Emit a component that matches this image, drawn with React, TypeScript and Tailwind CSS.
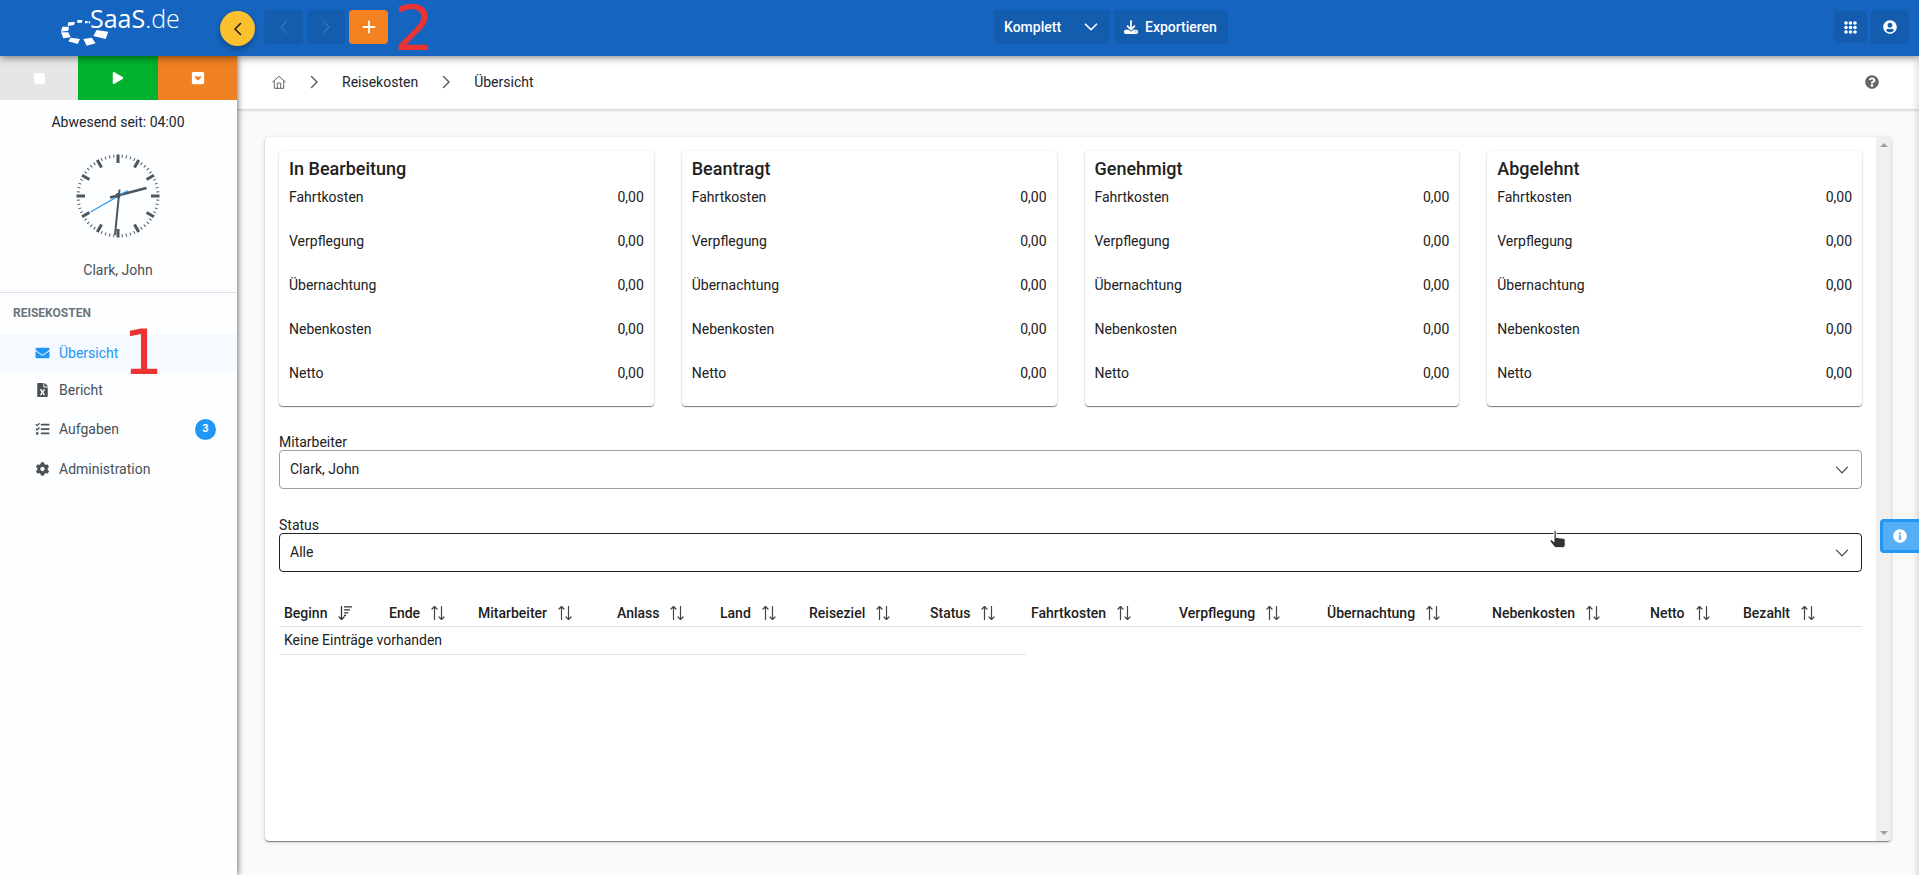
import React from 'react';
import {
  FaCaretSquareDown,
  FaCog,
  FaEnvelope,
  FaFileExcel,
  FaInfoCircle,
  FaPlay,
  FaQuestionCircle,
  FaTasks,
  FaUserCircle,
} from 'react-icons/fa';
import { FaDownload } from 'react-icons/fa6';

const summaryTitles = ['In Bearbeitung', 'Beantragt', 'Genehmigt', 'Abgelehnt'];
const costTypes = ['Fahrtkosten', 'Verpflegung', 'Übernachtung', 'Nebenkosten', 'Netto'];

const columns = [
  { label: 'Beginn', width: 'w-[105px]' },
  { label: 'Ende', width: 'w-[89px]' },
  { label: 'Mitarbeiter', width: 'w-[139px]' },
  { label: 'Anlass', width: 'w-[103px]' },
  { label: 'Land', width: 'w-[89px]' },
  { label: 'Reiseziel', width: 'w-[121px]' },
  { label: 'Status', width: 'w-[101px]' },
  { label: 'Fahrtkosten', width: 'w-[148px]' },
  { label: 'Verpflegung', width: 'w-[148px]' },
  { label: 'Übernachtung', width: 'w-[165px]' },
  { label: 'Nebenkosten', width: 'w-[158px]' },
  { label: 'Netto', width: 'w-[93px]' },
  { label: 'Bezahlt', width: 'w-[124px]' },
];

const navItems = [
  { label: 'Übersicht', icon: FaEnvelope, active: true, height: 'h-[37px]' },
  { label: 'Bericht', icon: FaFileExcel, height: 'h-[37px]' },
  { label: 'Aufgaben', icon: FaTasks, badge: 3, height: 'h-[42px]' },
  { label: 'Administration', icon: FaCog, height: 'h-[37px]' },
];

const Chevron: React.FC<{ d: string; className?: string; width?: number }> = ({ d, className, width = 1.4 }) => (
  <svg viewBox="0 0 14 14" className={className} fill="none" stroke="currentColor" strokeWidth={width} strokeLinecap="round" strokeLinejoin="round" aria-hidden="true">
    <path d={d} />
  </svg>
);

const LEFT = 'M9.5 1.5 4 7l5.5 5.5';
const RIGHT = 'M4.5 1.5 10 7l-5.5 5.5';
const DOWN = 'M1.5 4.2 7 9.8l5.5-5.6';

const Logo = () => (
  <a href="#" aria-label="SaaS.de" className="relative block h-[40px] w-[120px] text-white">
    <svg viewBox="0 0 120 40" className="absolute inset-0 h-full w-full" fill="currentColor" aria-hidden="true">
      <path d="M36.700 24l11.600 1.700-2.600 7.300-12.400-3z" />
      <path d="M23.300 33l8.400-1.300 4 5.600-9 2.400z" />
      <path d="M10.700 31.700l9.300 1.300-2.300 5-9.400-2.700z" />
      <path d="M1 26.300h7.300l2.400 5-7.400 1z" />
      <path d="M2.300 20.700H9l-.7 4-7.300 1z" />
      <path d="M8.300 16.300l6.700-.3-1 3-6.300 1z" />
      <path d="M17.300 14h5l-.3 2.700-4.700.3z" />
      <path d="M25 15h2.700l-.2 2.200H25z" />
      <path d="M28.600 15.400h1.600v1.900h-1.600z" />
    </svg>
    <span className="absolute left-[30px] top-[-4px] font-['Open_Sans'] text-[25px] font-normal leading-[32px]">
      SaaS<span className="font-light">.de</span>
    </span>
  </a>
);

const Clock = () => (
  <svg viewBox="0 0 84 84" className="h-[84px] w-[84px]" aria-hidden="true">
    {Array.from({ length: 60 }, (_, i) => (
      <line
        key={i}
        x1="42"
        x2="42"
        y1="0.500"
        y2={i % 5 ? 3.5 : 9}
        stroke="#4b5661"
        strokeWidth={i % 5 ? 1 : 3}
        transform={`rotate(${i * 6} 42 42)`}
      />
    ))}
    <path d="M34 43.500 70.500 34" stroke="#4b5661" strokeWidth="2.500" />
    <path d="M43.500 35.500 39 81" stroke="#4b5661" strokeWidth="2" />
    <path d="M52 36.500 14.500 58" stroke="#2196f3" strokeWidth="1.200" />
    <circle cx="42" cy="41.500" r="2.500" fill="#4b5661" />
  </svg>
);

const HomeIcon = () => (
  <svg viewBox="0 0 14 14" className="h-[14px] w-[14px]" fill="none" stroke="currentColor" strokeLinejoin="round" strokeLinecap="round" aria-hidden="true">
    <path d="M.6 7 7 1.200 13.400 7M2.300 5.800v7.500h9.400V5.800M5.300 13.300V8h3.400v5.300" />
  </svg>
);

const SortIcon = () => (
  <svg viewBox="0 0 14 14" className="h-[14px] w-[14px]" fill="none" stroke="#444" strokeWidth="1.200" strokeLinecap="round" strokeLinejoin="round" aria-hidden="true">
    <path d="M3.500 13.500V.6M1 3 3.500.5 6 3M10.500.5v12.900M8 11l2.500 2.500L13 11" />
  </svg>
);

const SortDownIcon = () => (
  <svg viewBox="0 0 14 14" className="h-[14px] w-[14px]" fill="none" stroke="#333" strokeWidth="1.300" strokeLinecap="round" strokeLinejoin="round" aria-hidden="true">
    <path d="M3.500.5v13M1 11l2.500 2.500L6 11M6.500.8H13.500M6.500 3.800h5M6.500 6.800h3.300M6.500 9.500h1" />
  </svg>
);

const SelectField: React.FC<{ id: string; label: string; value: string; border: string }> = ({ id, label, value, border }) => (
  <div>
    <label htmlFor={id} className="block h-4 leading-4">{label}</label>
    <div className="grid items-center">
      <select id={id} className={`col-start-1 row-start-1 h-[39px] w-full appearance-none rounded border bg-white px-[10px] pb-[2px] ${border}`}>
        <option>{value}</option>
      </select>
      <Chevron d={DOWN} width={1.2} className="pointer-events-none col-start-1 row-start-1 mr-[13px] h-[14px] w-[14px] justify-self-end text-[#444]" />
    </div>
  </div>
);

const Header = () => (
  <header className="relative z-20 flex h-14 shrink-0 items-start bg-[#1565c0] font-medium text-white shadow-[0_1px_8px_rgba(0,0,0,0.55)]">
    <div className="flex w-[220px] shrink-0 pl-[60px] pt-[6px]">
      <Logo />
    </div>
    <button aria-label="Menü einklappen" className="mt-[11px] flex h-[35px] w-[35px] items-center justify-center rounded-full bg-[#fbc02d] text-[#222] shadow-[0_3px_6px_rgba(0,0,0,0.3)]">
      <Chevron d={LEFT} width={1.6} className="h-[14px] w-[14px]" />
    </button>
    <div className="ml-[9px] flex gap-1 pt-[10px]">
      <button aria-label="Zurück" className="flex h-[34px] w-[39px] items-center justify-center rounded bg-[#135cae] text-[#2f74c2]">
        <Chevron d={LEFT} className="h-[14px] w-[14px]" />
      </button>
      <button aria-label="Vor" className="flex h-[34px] w-[38px] items-center justify-center rounded bg-[#135cae] text-[#2f74c2]">
        <Chevron d={RIGHT} className="h-[14px] w-[14px]" />
      </button>
      <button aria-label="Neu" className="flex h-[34px] w-[39px] items-center justify-center rounded bg-[#f58220]">
        <Chevron d="M7 1.500v11M1.500 7h11" width={1.8} className="h-[14px] w-[14px]" />
      </button>
    </div>
    <div className="flex flex-1 justify-center gap-1 pt-[10px]">
      <div className="grid items-center">
        <select aria-label="Ansicht" className="col-start-1 row-start-1 h-[34px] w-[116px] appearance-none rounded bg-[#135cae] px-[10px]">
          <option>Komplett</option>
        </select>
        <Chevron d={DOWN} width={1.6} className="pointer-events-none col-start-1 row-start-1 mr-3 h-[14px] w-[14px] justify-self-end" />
      </div>
      <button className="flex h-[34px] w-[114px] items-center gap-[7px] rounded bg-[#135cae] px-[10px]">
        <FaDownload className="h-[14px] w-[14px]" />
        Exportieren
      </button>
    </div>
    <div className="flex items-center gap-1 pr-[10px] pt-[10px]">
      <button aria-label="Apps" className="flex h-8 w-[33px] items-center justify-center rounded bg-[#135cae]">
        <svg viewBox="0 0 13 13" className="h-[13px] w-[13px]" fill="currentColor" aria-hidden="true">
          {[2, 6.5, 11].map((y) => [2, 6.5, 11].map((x) => <circle key={`${x}-${y}`} cx={x} cy={y} r="1.800" />))}
        </svg>
      </button>
      <button aria-label="Benutzer" className="flex h-[34px] w-[38px] items-center justify-center rounded bg-[#135cae]">
        <FaUserCircle className="h-[14px] w-[14px]" />
      </button>
    </div>
    <span className="absolute left-[394px] top-px font-['DejaVu_Sans'] text-[63px] font-normal leading-[56px] text-[#eb3334]">2</span>
  </header>
);

const Sidebar = () => (
  <aside className="relative z-10 flex w-[237px] shrink-0 flex-col bg-[#fdfeff] text-[#495057] shadow-[1px_0_6px_rgba(0,0,0,0.55)]">
    <div className="flex h-11 text-white">
      <button aria-label="Stopp" className="flex w-[78px] items-center justify-center bg-[#e6e6e6]">
        <span className="h-[11px] w-[11px] rounded-[2px] bg-white" />
      </button>
      <button aria-label="Start" className="flex w-20 items-center justify-center bg-[#00b22d]">
        <FaPlay className="h-[12px] w-[12px]" />
      </button>
      <button aria-label="Mehr" className="flex flex-1 items-center justify-center bg-[#ef8122]">
        <FaCaretSquareDown className="h-[14px] w-[14px]" />
      </button>
    </div>
    <div className="flex flex-col items-center border-b border-[#dee2e6] py-3 pr-px">
      <p className="leading-5 text-[#212529]">Abwesend seit: 04:00</p>
      <div className="py-[22px]">
        <Clock />
      </div>
      <p className="leading-5">Clark, John</p>
    </div>
    <h2 className="mt-[10px] px-[13px] text-[12px] font-bold leading-5 text-[#6c757d]">REISEKOSTEN</h2>
    <nav className="mt-[11px]">
      {navItems.map(({ label, icon: Icon, active, badge, height }) => (
        <a
          key={label}
          href="#"
          className={`flex items-center pl-[35px] pr-[21px] ${height} ${active ? 'bg-[#f4faff] text-[#2196f3]' : ''}`}
        >
          <Icon className="h-[14px] w-[15px]" />
          <span className="ml-[9px] flex-1">{label}</span>
          {badge && (
            <span className="flex h-[21px] w-[21px] items-center justify-center rounded-full bg-[#2196f3] text-[11px] font-bold text-white">
              {badge}
            </span>
          )}
        </a>
      ))}
    </nav>
    <span className="absolute left-[123px] top-[260px] font-['DejaVu_Sans'] text-[63px] leading-[74px] text-[#eb3334]">1</span>
  </aside>
);

const Breadcrumb = () => (
  <div className="flex h-[53px] shrink-0 items-center bg-white pb-[2px] pl-[35px] pr-10 text-[#212529] shadow-[0_1px_3px_rgba(0,0,0,0.2)]">
    <nav className="flex flex-1 items-center" aria-label="Breadcrumb">
      <a href="#" aria-label="Start" className="text-[#666]"><HomeIcon /></a>
      <Chevron d={RIGHT} className="mx-[21px] h-[14px] w-[14px] text-[#555]" />
      <a href="#">Reisekosten</a>
      <Chevron d={RIGHT} className="mx-[21px] h-[14px] w-[14px] text-[#555]" />
      <a href="#">Übersicht</a>
    </nav>
    <button aria-label="Hilfe" className="text-[#666]">
      <FaQuestionCircle className="h-[14px] w-[14px]" />
    </button>
  </div>
);

const SummaryCard: React.FC<{ title: string }> = ({ title }) => (
  <section className="rounded bg-white px-[10px] pb-[11px] pt-[6px] shadow-[0_1px_1px_rgba(0,0,0,0.5),0_0_3px_rgba(0,0,0,0.1)]">
    <h3 className="text-[18px] font-medium leading-6">{title}</h3>
    <dl className="-mt-[6px]">
      {costTypes.map((type) => (
        <div key={type} className="flex h-11 items-center justify-between">
          <dt>{type}</dt>
          <dd>0,00</dd>
        </div>
      ))}
    </dl>
  </section>
);

const ExpenseTable = () => (
  <table className="mt-[29px] w-full table-fixed text-left">
    <thead>
      <tr className="border-b border-[#e2e2e2]">
        {columns.map(({ label, width }, idx) => (
          <th key={label} className={`h-[25px] p-0 pl-[5px] font-medium ${width}`}>
            <button className="flex items-center gap-[11px]">
              {label}
              {idx === 0 ? <SortDownIcon /> : <SortIcon />}
            </button>
          </th>
        ))}
      </tr>
    </thead>
    <tbody>
      <tr>
        <td colSpan={7} className="h-7 border-b border-[#e2e2e2] p-0 pl-[5px]">Keine Einträge vorhanden</td>
      </tr>
    </tbody>
  </table>
);

const ScrollTrack = () => (
  <div className="flex w-[15px] shrink-0 flex-col items-center justify-between rounded-r bg-[#f0f0f0] py-[6px] text-[#a0a0a0]">
    <svg viewBox="0 0 8 4" className="h-1 w-2" fill="currentColor" aria-hidden="true"><path d="M4 0l4 4H0z" /></svg>
    <svg viewBox="0 0 8 4" className="h-1 w-2" fill="currentColor" aria-hidden="true"><path d="M0 0h8L4 4z" /></svg>
  </div>
);

const HandCursor = () => (
  <svg viewBox="0 0 18 22" className="absolute left-[1549px] top-[529px] z-30 h-[22px] w-[18px]" aria-hidden="true">
    <path
      d="M5 2.500c0-1.300 2.200-1.300 2.200 0V8.500l7 .7c1.400.3 2 1.200 2 2.300v4c0 1.800-1 3.200-2.500 3.200H7.500c-1 0-1.800-.4-2.400-1.200L1.200 12.500c-.6-1.200.8-2.200 1.800-1.400L5 12.800z"
      fill="#333"
      stroke="#fff"
      strokeWidth="1"
    />
  </svg>
);

const App: React.FC = () => {
  return (
    <div className="relative flex min-h-screen flex-col overflow-hidden bg-[#fafafa] font-[Roboto,sans-serif] text-[14px] leading-5 text-[#212121]">
      <Header />
      <div className="flex flex-1">
        <Sidebar />
        <div className="flex min-w-0 flex-1 flex-col">
          <Breadcrumb />
          <main className="flex flex-1 px-7 pb-[34px] pt-7">
            <div className="flex flex-1 rounded bg-white shadow-[0_1px_1px_rgba(0,0,0,0.45),0_1px_4px_rgba(0,0,0,0.16)]">
              <div className="min-w-0 flex-1 px-[14px] pt-[14px]">
                <div className="grid grid-cols-4 gap-7">
                  {summaryTitles.map((title) => (
                    <SummaryCard key={title} title={title} />
                  ))}
                </div>
                <div className="mt-7 flex flex-col gap-7">
                  <SelectField id="employee" label="Mitarbeiter" value="Clark, John" border="border-[#9e9e9e]" />
                  <SelectField id="status" label="Status" value="Alle" border="border-[#212121]" />
                </div>
                <ExpenseTable />
              </div>
              <ScrollTrack />
            </div>
          </main>
        </div>
      </div>
      <button aria-label="Info" className="absolute right-0 top-[519px] z-20 flex h-[34px] w-[39px] items-center justify-center rounded-l border-[3px] border-r-0 border-[#2196f3] bg-[#55aef6] pr-[2px] text-white">
        <FaInfoCircle className="h-[14px] w-[14px]" />
      </button>
      <div className="pointer-events-none absolute bottom-0 right-0 top-14 z-10 w-[7px] bg-linear-to-r from-transparent to-black/10" />
      <HandCursor />
    </div>
  );
};

export default App;
